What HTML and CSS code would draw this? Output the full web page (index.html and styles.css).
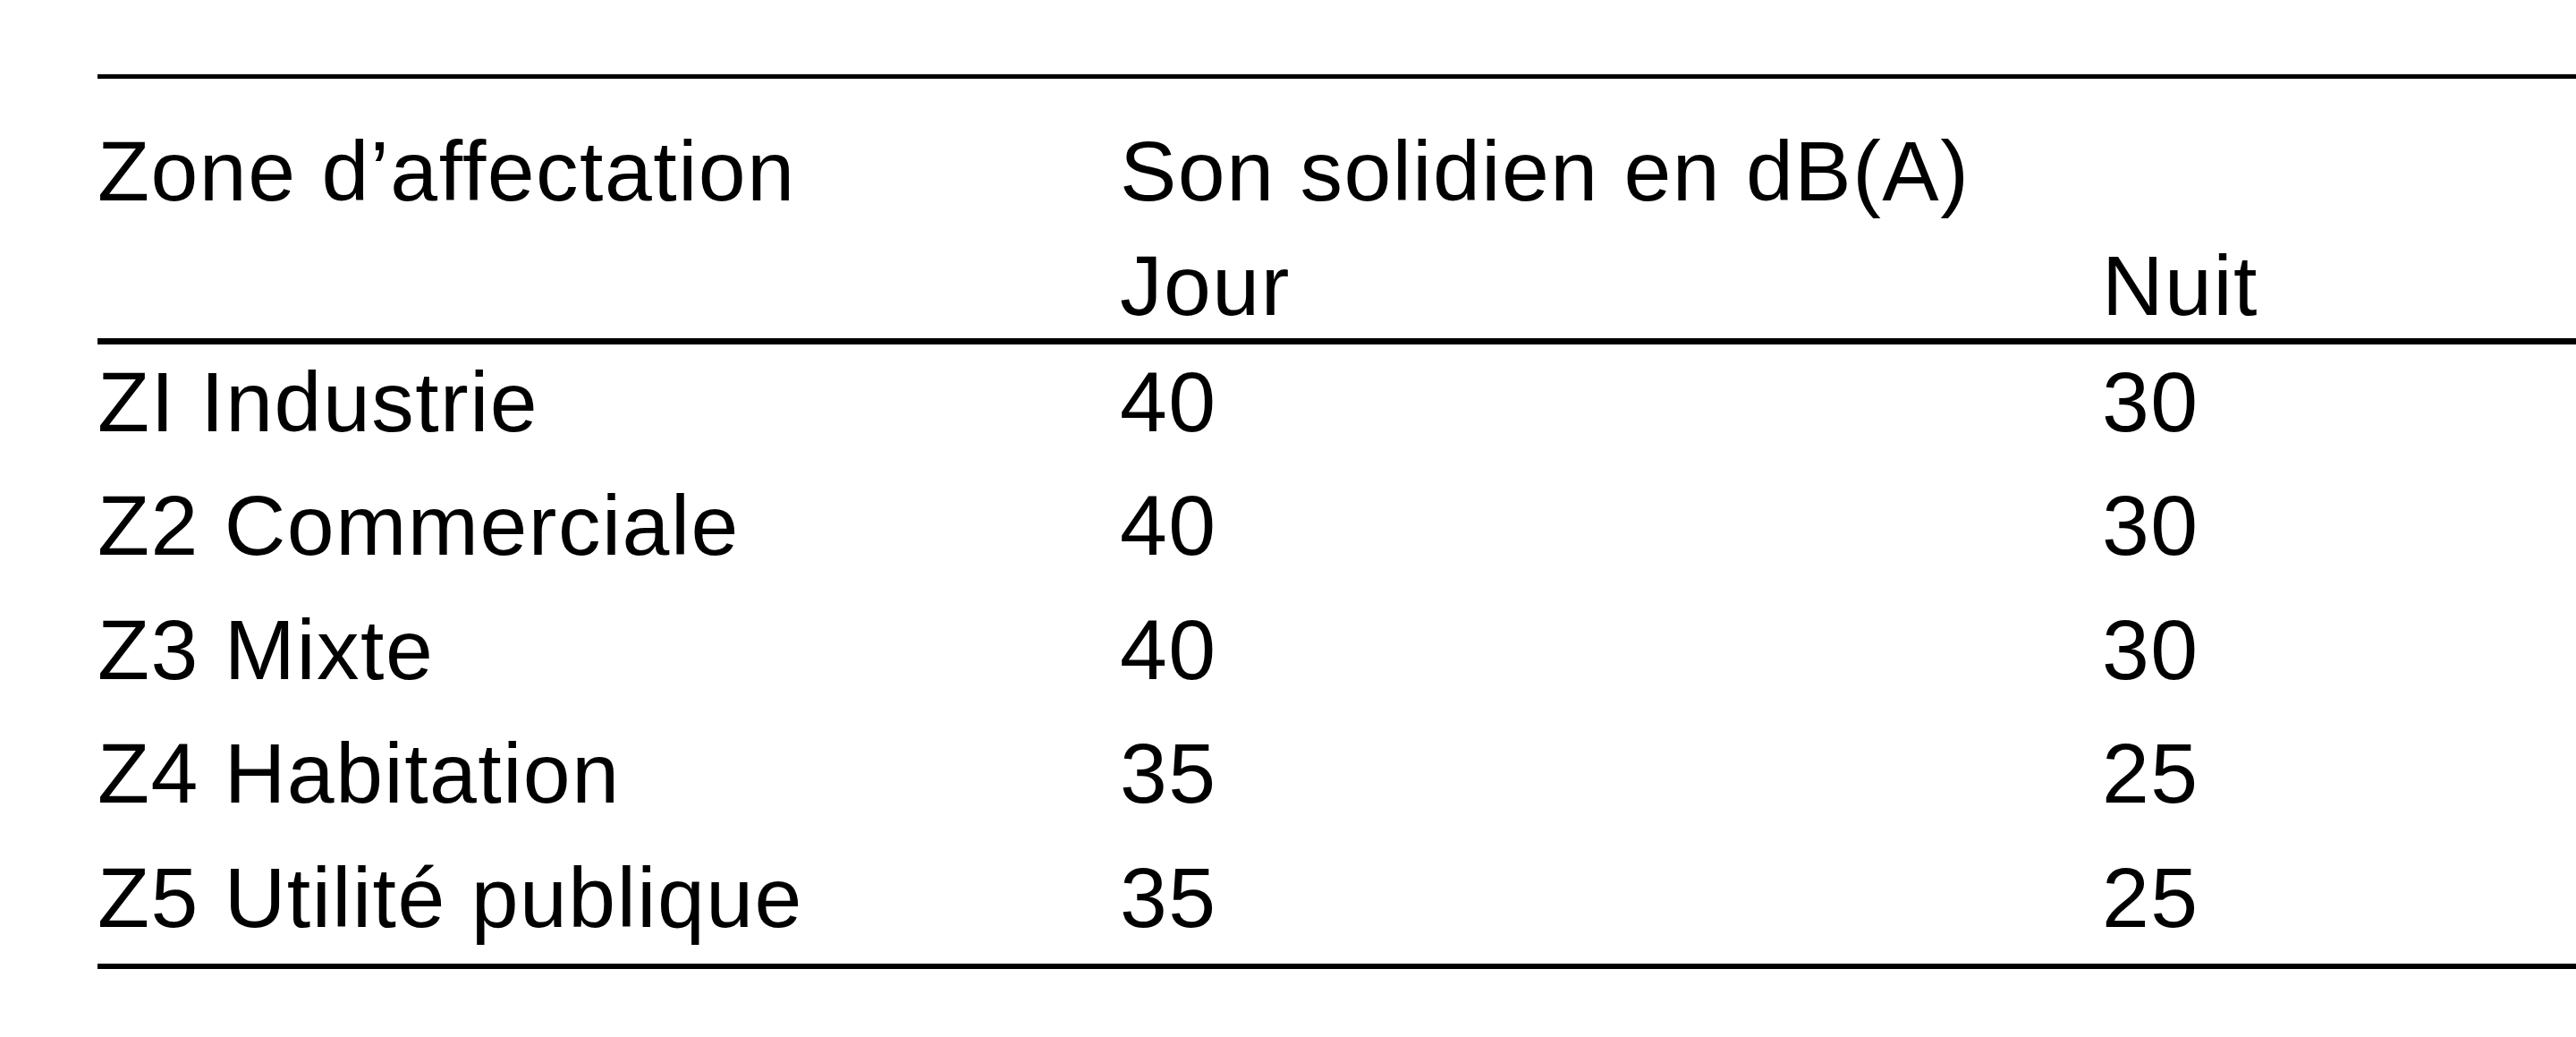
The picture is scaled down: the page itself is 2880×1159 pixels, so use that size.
FILE: index.html
```html
<!DOCTYPE html>
<html lang="fr">
<head>
<meta charset="utf-8">
<title>Son solidien</title>
<link rel="stylesheet" href="styles.css">
</head>
<body>
<table class="noise">
  <colgroup>
    <col class="c-zone">
    <col class="c-day">
    <col class="c-night">
  </colgroup>
  <thead>
    <tr class="h1">
      <td>Zone d’affectation</td>
      <td colspan="2">Son solidien en dB(A)</td>
    </tr>
    <tr class="h2">
      <td></td>
      <td>Jour</td>
      <td>Nuit</td>
    </tr>
  </thead>
  <tbody>
    <tr><td>ZI Industrie</td><td>40</td><td>30</td></tr>
    <tr><td>Z2 Commerciale</td><td>40</td><td>30</td></tr>
    <tr><td>Z3 Mixte</td><td>40</td><td>30</td></tr>
    <tr><td>Z4 Habitation</td><td>35</td><td>25</td></tr>
    <tr><td>Z5 Utilité publique</td><td>35</td><td>25</td></tr>
  </tbody>
</table>
</body>
</html>
```

FILE: styles.css
```css
html, body {
  margin: 0;
  padding: 0;
  background: #ffffff;
  overflow: hidden;
}

body {
  width: 2880px;
  height: 1159px;
}

.noise {
  margin: 83px 0 0 109px;
  width: 2771px;
  table-layout: fixed;
  border-collapse: separate;
  border-spacing: 0;
  font-family: "Liberation Sans", Arial, sans-serif;
  font-size: 95px;
  letter-spacing: 1.5px;
  line-height: 106px;
  color: #000000;
}

.c-zone { width: 1143px; }
.c-day { width: 1098px; }
.c-night { width: 530px; }

.noise td {
  padding: 0;
  white-space: nowrap;
  vertical-align: top;
  text-align: left;
}

.noise .h1 td {
  border-top: 5px solid #000;
  padding-top: 50px;
}

.noise .h2 td {
  padding-top: 22px;
  padding-bottom: 6px;
  border-bottom: 7px solid #000;
}

.noise tbody td {
  padding-top: 32.4px;
}

.noise tbody tr:first-child td {
  padding-top: 11px;
}

.noise tbody tr:last-child td {
  padding-bottom: 21px;
  border-bottom: 6px solid #000;
}
```
